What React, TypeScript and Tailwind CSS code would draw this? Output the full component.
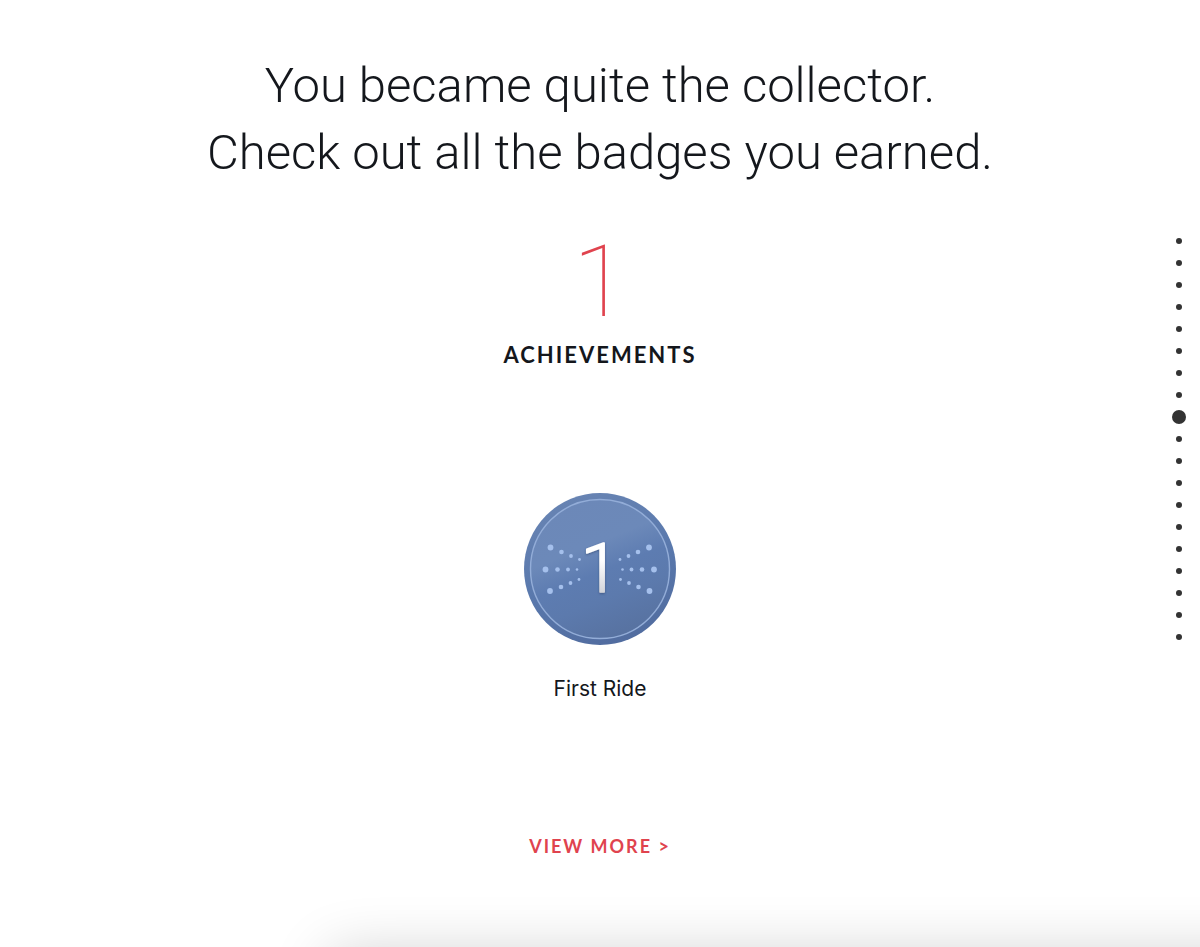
const sections = [
  'Welcome', 'Overview', 'Workouts', 'Minutes', 'Distance', 'Output', 'Calories',
  'Milestones', 'Achievements', 'Instructors', 'Classes', 'Music', 'Artists',
  'Disciplines', 'Streaks', 'Friends', 'Community', 'Goals', 'Summary',
];
const current = 8;

const rays: [number, number, number][] = [
  [26.5, 54.5, 2.9], [37.5, 59, 2.3], [47, 63, 1.9], [55.5, 66.5, 1.4],
  [21.5, 76.5, 2.9], [33.5, 76.5, 2.3], [44, 76.5, 1.9], [53, 76.5, 1.3],
  [26, 98, 2.9], [37, 94, 2.3], [46.5, 90, 1.9], [55, 86.5, 1.4],
];

function Badge() {
  return (
    <svg viewBox="0 0 152 152" className="block size-[152px]" role="img" aria-label="First Ride badge">
      <defs>
        <linearGradient id="rim" x1="0.3" y1="0" x2="0.65" y2="1">
          <stop offset="0" stopColor="#6884b3" />
          <stop offset="0.5" stopColor="#5a79ad" />
          <stop offset="1" stopColor="#516c9f" />
        </linearGradient>
        <linearGradient id="face" x1="0.3" y1="0" x2="0.7" y2="1">
          <stop offset="0" stopColor="#6c88b8" />
          <stop offset="0.33" stopColor="#6c89b9" />
          <stop offset="0.52" stopColor="#5d7cb1" />
          <stop offset="0.7" stopColor="#5c7aad" />
          <stop offset="1" stopColor="#57719f" />
        </linearGradient>
        <linearGradient id="digit" x1="0" y1="0" x2="0" y2="1">
          <stop offset="0.4" stopColor="#ffffff" />
          <stop offset="0.8" stopColor="#d2d4da" />
        </linearGradient>
        <filter id="shade" x="-50%" y="-30%" width="200%" height="160%">
          <feDropShadow dx="0" dy="1" stdDeviation="1.2" floodColor="#2f456f" floodOpacity="0.65" />
        </filter>
      </defs>
      <circle cx="76" cy="76" r="76" fill="url(#rim)" />
      <circle cx="76" cy="76" r="69.5" fill="url(#face)" stroke="#93add8" strokeWidth="1.4" />
      <g fill="#a5c0ec">
        {rays.map(([x, y, r]) => (
          <g key={`${x}-${y}`}>
            <circle cx={x} cy={y} r={r} />
            <circle cx={151.5 - x} cy={y} r={r} />
          </g>
        ))}
      </g>
      <text
        x="76"
        y="99"
        textAnchor="middle"
        className="font-['Roboto',sans-serif] text-[69px] font-light"
        fill="url(#digit)"
        stroke="url(#digit)"
        strokeWidth="1.6"
        strokeLinejoin="round"
        filter="url(#shade)"
      >
        1
      </text>
    </svg>
  );
}

export default function App() {
  return (
    <div className="relative min-h-screen overflow-hidden bg-white font-['Inter',sans-serif] text-[#14171c]">
      <main className="flex flex-col items-center px-16 pt-[52px] pb-16 text-center">
        <h1 className="font-['Roboto',sans-serif] text-[49px] leading-[67px] font-light">
          You became quite the collector.
          <br />
          Check out all the badges you earned.
        </h1>

        <p className="mt-[46px] font-['Roboto',sans-serif] text-[100px] leading-[100px] font-thin text-[#e0434e]">1</p>
        <h2 className="mt-[7px] font-['Lato',sans-serif] text-[22px] leading-8 font-bold tracking-[2px]">
          ACHIEVEMENTS
        </h2>

        <figure className="mt-[122px] flex flex-col items-center">
          <Badge />
          <figcaption className="mt-7 text-[21px] leading-8">First Ride</figcaption>
        </figure>

        <a
          href="#achievements"
          className="mt-[125px] font-['Lato',sans-serif] text-[18px] leading-8 font-bold tracking-[2px] text-[#e0434e]"
        >
          VIEW MORE &gt;
        </a>
      </main>

      <nav aria-label="Sections" className="absolute top-[230px] right-[10px]">
        <ul>
          {sections.map((name, i) => (
            <li key={name}>
              <a
                href={`#${name.toLowerCase()}`}
                aria-label={name}
                aria-current={i === current ? 'true' : undefined}
                className="flex size-[22px] items-center justify-center"
              >
                <span className={i === current ? 'size-[14px] rounded-full bg-[#333333]' : 'size-[6px] rounded-full bg-[#333333]'} />
              </a>
            </li>
          ))}
        </ul>
      </nav>

      <div className="absolute top-full -right-20 left-[330px] h-20 translate-y-2 shadow-[0_0_60px_rgba(0,0,0,0.2)]" />
    </div>
  );
}
